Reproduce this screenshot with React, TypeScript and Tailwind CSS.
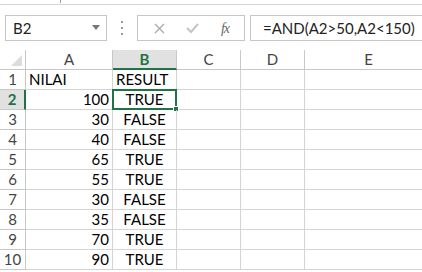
const rows: [number, string, string][] = [
  [1, "NILAI", "RESULT"],
  [2, "100", "TRUE"],
  [3, "30", "FALSE"],
  [4, "40", "FALSE"],
  [5, "65", "TRUE"],
  [6, "55", "TRUE"],
  [7, "30", "FALSE"],
  [8, "35", "FALSE"],
  [9, "70", "TRUE"],
  [10, "90", "TRUE"],
];

const cols = ["A", "B", "C", "D", "E"];

const font = { fontFamily: "Lato, 'Liberation Sans', sans-serif" };

function FormulaBar() {
  return (
    <div className="flex h-[45px] items-start pl-[5px] pt-[10px]">
      {/* name box */}
      <div className="relative flex h-[26px] w-[102px] items-center border border-[#c6c6c6] pl-[7px] text-[15px] text-[#222]">
        B2
        <svg className="absolute right-[6px] top-[9px]" width="8" height="5" viewBox="0 0 8 5">
          <path d="M0 0h8L4 5z" fill="#777" />
        </svg>
      </div>
      {/* grip */}
      <div className="flex h-[26px] w-[30px] flex-col items-center justify-center gap-[4px]">
        <span className="h-[2px] w-[2px] bg-[#9a9a9a]" />
        <span className="h-[2px] w-[2px] bg-[#9a9a9a]" />
        <span className="h-[2px] w-[2px] bg-[#9a9a9a]" />
      </div>
      {/* cancel / enter / fx */}
      <div className="flex h-[26px] w-[108px] items-center border border-[#c6c6c6]">
        <div className="flex w-[38px] justify-center pl-[4px]">
          <svg width="11" height="11" viewBox="0 0 11 11">
            <path d="M1 1l9 9M10 1l-9 9" stroke="#a8a8a8" strokeWidth="1.3" />
          </svg>
        </div>
        <div className="flex w-[32px] justify-center">
          <svg width="13" height="10" viewBox="0 0 13 10">
            <path d="M1 5l4 4 7-8" stroke="#c4c4c4" strokeWidth="2" fill="none" />
          </svg>
        </div>
        <div
          className="flex flex-1 justify-center pr-[2px] text-[14px] italic text-[#666]"
          style={{ fontFamily: "'Liberation Serif', serif" }}
        >
          <span className="tracking-[-1px]">fx</span>
        </div>
      </div>
      {/* formula */}
      <div className="ml-[5px] flex h-[26px] flex-1 items-center border-y border-l border-[#c6c6c6] pl-[12px] text-[15px] text-[#222]">
        =AND(A2&gt;50,A2&lt;150)
      </div>
    </div>
  );
}

function Grid() {
  return (
    <div className="grid grid-cols-[26px_87px_64px_64px_64px_128px] text-[15px]">
      {/* header row */}
      <div className="relative h-[20px] border-b border-r border-[#c8c8c8]">
        <svg className="absolute right-[3px] bottom-[3px]" width="11" height="11" viewBox="0 0 11 11">
          <path d="M11 0v11H0z" fill="#dcdcdc" />
        </svg>
      </div>
      {cols.map((c) =>
        c === "B" ? (
          <div
            key={c}
            className="flex h-[20px] items-center justify-center border-b-2 border-r border-b-[#217346] border-r-[#c8c8c8] bg-[#e1e1e1] font-bold text-[#217346]"
          >
            {c}
          </div>
        ) : (
          <div
            key={c}
            className="flex h-[20px] items-center justify-center border-b border-r border-[#c8c8c8] text-[#444]"
          >
            {c}
          </div>
        )
      )}
      {rows.map(([n, a, b]) => (
        <Row key={n} n={n} a={a} b={b} />
      ))}
    </div>
  );
}

function Row({ n, a, b }: { n: number; a: string; b: string }) {
  const sel = n === 2;
  const numeric = n > 1;
  return (
    <>
      {sel ? (
        <div className="flex h-[20px] items-center justify-center border-b border-r-2 border-b-[#c8c8c8] border-r-[#217346] bg-[#e1e1e1] font-bold text-[#217346]">
          {n}
        </div>
      ) : (
        <div className="flex h-[20px] items-center justify-center border-b border-r border-[#c8c8c8] text-[#444]">
          {n}
        </div>
      )}
      <div
        className={`flex h-[20px] items-center border-b border-r border-[#d4d4d4] text-black ${
          numeric ? "justify-end pr-[3px]" : "pl-[3px]"
        }`}
      >
        {a}
      </div>
      <div
        className={`relative flex h-[20px] items-center border-b border-r border-[#d4d4d4] text-black ${
          numeric ? "justify-center" : "pl-[3px]"
        }`}
      >
        {b}
        {sel && (
          <div className="absolute -left-[1px] -top-[1px] h-[21px] w-[65px] border-2 border-[#217346]">
            <div className="absolute -bottom-[4px] -right-[4px] h-[6px] w-[6px] border border-white bg-[#217346]" />
          </div>
        )}
      </div>
      <div className="h-[20px] border-b border-r border-[#d4d4d4]" />
      <div className="h-[20px] border-b border-r border-[#d4d4d4]" />
      <div className="h-[20px] border-b border-[#d4d4d4]" />
    </>
  );
}

export default function App() {
  return (
    <div className="relative h-[272px] w-[422px] overflow-hidden bg-white" style={font}>
      <div className="relative h-[5px] border-b border-[#d4d4d4]">
        <span className="absolute left-[60px] top-0 h-[3px] w-[1px] bg-[#999]" />
      </div>
      <FormulaBar />
      <Grid />
    </div>
  );
}
